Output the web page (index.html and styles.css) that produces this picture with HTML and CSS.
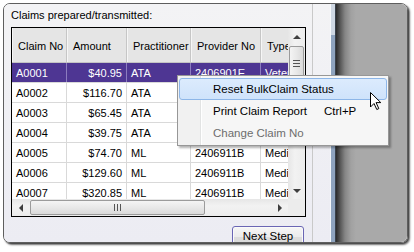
FILE: index.html
```html
<!DOCTYPE html>
<html>
<head>
<meta charset="utf-8">
<title>Claims</title>
<link rel="stylesheet" href="styles.css">
</head>
<body>
<div class="frame">
  <div class="panel">
    <div class="main">
      <div class="label">Claims prepared/transmitted:</div>
      <div class="grid">
        <div class="viewport">
          <div class="row head">
            <div class="c w1">Claim No</div>
            <div class="c w2">Amount</div>
            <div class="c w3">Practitioner</div>
            <div class="c w4">Provider No</div>
            <div class="c w5">Type</div>
          </div>
          <div class="row sel">
            <div class="c w1">A0001</div><div class="c w2 num">$40.95</div><div class="c w3">ATA</div><div class="c w4">2406901E</div><div class="c w5">Veteran</div>
          </div>
          <div class="row">
            <div class="c w1">A0002</div><div class="c w2 num">$116.70</div><div class="c w3">ATA</div><div class="c w4">2406901E</div><div class="c w5">Veteran</div>
          </div>
          <div class="row">
            <div class="c w1">A0003</div><div class="c w2 num">$65.45</div><div class="c w3">ATA</div><div class="c w4">2406901E</div><div class="c w5">Veteran</div>
          </div>
          <div class="row">
            <div class="c w1">A0004</div><div class="c w2 num">$39.75</div><div class="c w3">ATA</div><div class="c w4">2406901E</div><div class="c w5">Veteran</div>
          </div>
          <div class="row">
            <div class="c w1">A0005</div><div class="c w2 num">$74.70</div><div class="c w3">ML</div><div class="c w4">2406911B</div><div class="c w5">Medicare</div>
          </div>
          <div class="row">
            <div class="c w1">A0006</div><div class="c w2 num">$129.60</div><div class="c w3">ML</div><div class="c w4">2406911B</div><div class="c w5">Medicare</div>
          </div>
          <div class="row">
            <div class="c w1">A0007</div><div class="c w2 num">$320.85</div><div class="c w3">ML</div><div class="c w4">2406911B</div><div class="c w5">Medicare</div>
          </div>
        </div>
        <div class="vscroll">
          <div class="sbtn"><span class="tri up"></span></div>
          <div class="vtrack"><div class="vthumb"><span class="hgrip"></span></div></div>
          <div class="sbtn"><span class="tri down"></span></div>
        </div>
        <div class="hscroll">
          <div class="sbtn"><span class="tri left"></span></div>
          <div class="htrack"><div class="hthumb"><span class="vgrip"></span></div></div>
          <div class="sbtn"><span class="tri right"></span></div>
        </div>
        <div class="corner"></div>
      </div>
      <div class="actions"><button class="btn">Next Step</button></div>
    </div>
    <div class="splitter"></div>
  </div>
  <div class="sep"></div>
  <div class="dim"></div>
</div>

<div class="menu">
  <div class="mi hot"><span class="ml">Reset BulkClaim Status</span></div>
  <div class="mi"><span class="ml">Print Claim Report</span><span class="ms">Ctrl+P</span></div>
  <div class="mi dis"><span class="ml">Change Claim No</span></div>
</div>

<svg class="cursor" width="13" height="20" viewBox="0 0 13 20">
  <path d="M1.5 1.5 V16 L5 12.5 L7.8 18.5 L9.8 17.6 L7.1 11.6 H11.8 Z" fill="#fff" stroke="#000" stroke-width="1" stroke-linejoin="miter"/>
</svg>
</body>
</html>
```
FILE: styles.css
```css
html, body {
  margin: 0;
  padding: 0;
}
body {
  position: relative;
  width: 414px;
  height: 252px;
  overflow: hidden;
  background: #fff;
  font-family: "Liberation Sans", Arial, sans-serif;
  font-size: 11px;
  color: #000;
}

.frame {
  margin: 3px 0 0 3px;
  width: 405px;
  height: 240px;
  box-sizing: border-box;
  border: 1px solid #5e5e5e;
  border-radius: 7px;
  overflow: hidden;
  display: flex;
  box-shadow: 2px 2px 2px rgba(0, 0, 0, 0.55), 1px 1px 1px rgba(0, 0, 0, 0.4);
}

.panel {
  width: 326px;
  flex: none;
  display: flex;
  box-sizing: border-box;
  padding-left: 7px;
  background: linear-gradient(#f3f3f5, #ececf3);
}

.main {
  width: 295px;
  flex: none;
  display: flex;
  flex-direction: column;
}

.label {
  margin-top: 5px;
  height: 13px;
  line-height: 13px;
  white-space: nowrap;
}

.splitter {
  margin-left: 6px;
  width: 1px;
  background: #c9c9c9;
}

.sep {
  width: 6px;
  flex: none;
  background:
    linear-gradient(to right, #f7f9fb 0 1px, transparent 1px 5px, #3a424c 5px 6px),
    linear-gradient(to bottom, #cfd8e3 0 31px, #8fa4bf 31px);
}

.dim {
  flex: 1;
  background: linear-gradient(to right, #2b2b2b 0, #555 4px, #858585 9px, #a1a1a1 15px, #a9a9a9 20px);
}

/* grid */
.grid {
  margin-top: 5px;
  display: grid;
  grid-template-columns: 276px 17px;
  grid-template-rows: 171px 17px;
  border: 1px solid #000;
  background: #fff;
}

.viewport {
  overflow: hidden;
}

.row {
  display: flex;
  width: max-content;
  height: 20px;
  box-sizing: border-box;
  border-bottom: 1px solid #d9d9d9;
}

.c {
  flex: none;
  box-sizing: border-box;
  padding: 1px 4px 0;
  line-height: 18px;
  border-right: 1px solid #d9d9d9;
  white-space: nowrap;
  overflow: hidden;
}
.w1 { width: 55px; }
.w2 { width: 60px; }
.w3 { width: 64px; }
.w4 { width: 70px; }
.w5 { width: 70px; }
.num { text-align: right; }

.head {
  height: 35px;
  background: #e5e5e5;
  border-bottom: 1px solid #c4c4c4;
}
.head .c {
  height: 34px;
  padding: 3px 0 0 6px;
  line-height: 31px;
  border-right: 1px solid #c6c6c6;
  box-shadow: inset 1px 0 #f6f6f6;
}

.sel {
  background: #4e3693;
  color: #fff;
  border-bottom-color: #d9d9d9;
}
.sel .c {
  border-right-color: #8c7cbf;
}

/* scrollbars */
.vscroll {
  display: flex;
  flex-direction: column;
  background: linear-gradient(to right, #e6e6e6, #f2f2f2 40%, #ececec);
}
.hscroll {
  display: flex;
  background: linear-gradient(to bottom, #e6e6e6, #f2f2f2 40%, #ececec);
}
.corner {
  background: #ececec;
}

.sbtn {
  width: 17px;
  height: 17px;
  flex: none;
  display: flex;
  align-items: center;
  justify-content: center;
}

.tri {
  width: 0;
  height: 0;
  border: 4px solid transparent;
}
.tri.up { border-bottom-color: #3f3f3f; border-top-width: 0; }
.tri.down { border-top-color: #3f3f3f; border-bottom-width: 0; }
.tri.left { border-right-color: #3f3f3f; border-left-width: 0; }
.tri.right { border-left-color: #3f3f3f; border-right-width: 0; }

.vtrack {
  flex: 1;
}
.vthumb {
  margin: 1px 1px 0;
  height: 35px;
  box-sizing: border-box;
  border: 1px solid #9b9b9b;
  border-radius: 2px;
  background: linear-gradient(to right, #f4f4f4, #e8e8e8 50%, #dadada);
  display: flex;
  align-items: center;
  justify-content: center;
}
.hgrip {
  width: 7px;
  height: 7px;
  background: repeating-linear-gradient(to bottom, #555 0 1px, transparent 1px 3px);
}

.htrack {
  flex: 1;
}
.hthumb {
  margin: 1px 0 0 1px;
  width: 175px;
  height: 15px;
  box-sizing: border-box;
  border: 1px solid #9b9b9b;
  border-radius: 2px;
  background: linear-gradient(to bottom, #f4f4f4, #e8e8e8 50%, #dadada);
  display: flex;
  align-items: center;
  justify-content: center;
}
.vgrip {
  width: 7px;
  height: 7px;
  background: repeating-linear-gradient(to right, #555 0 1px, transparent 1px 3px);
}

/* button */
.actions {
  display: flex;
  justify-content: flex-end;
  padding-right: 2px;
  margin-top: 9px;
}
.btn {
  width: 72px;
  height: 23px;
  padding: 0 0 3px;
  box-sizing: border-box;
  border: 1px solid #6a66b4;
  border-radius: 3px;
  background: linear-gradient(#f6f6f6, #ebebeb 50%, #dddddd 50%, #d6d6d6);
  box-shadow: inset 0 0 0 1px #fafafa;
  font-family: "Liberation Sans", Arial, sans-serif;
  font-size: 11.5px;
  line-height: 14px;
  color: #000;
}

/* context menu */
.menu {
  position: absolute;
  left: 177px;
  top: 75px;
  width: 212px;
  box-sizing: border-box;
  padding: 2px 1px 1px;
  border: 1px solid #979797;
  background: linear-gradient(to right, #f1f1f1 0 22px, #e2e3e3 22px 23px, #fff 23px 24px, #f6f6f6 24px);
  box-shadow: 2px 2px 2px rgba(0, 0, 0, 0.3);
  font-size: 11.5px;
}
.mi {
  display: flex;
  height: 22px;
  line-height: 20px;
  box-sizing: border-box;
  padding-left: 33px;
  border: 1px solid transparent;
  border-radius: 3px;
  white-space: nowrap;
}
.ml {
  width: 111px;
}
.hot {
  background: linear-gradient(#dcebfd, #cfe3fb);
  border-color: #8db6e8;
}
.dis {
  color: #6d6d6d;
}

.cursor {
  position: absolute;
  left: 369px;
  top: 91px;
}
```
